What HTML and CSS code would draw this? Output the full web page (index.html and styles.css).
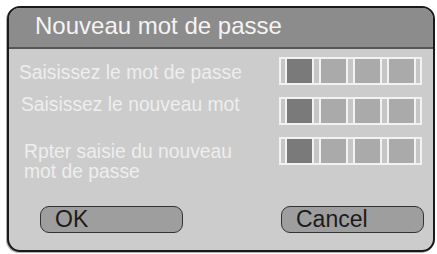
FILE: index.html
```html
<!DOCTYPE html>
<html lang="fr">
<head>
<meta charset="utf-8">
<title>Nouveau mot de passe</title>
<link rel="stylesheet" href="styles.css">
</head>
<body>
<div class="dialog">
  <div class="title">Nouveau mot de passe</div>
  <div class="content">
    <div class="form">
      <div class="row">
        <div class="label label-1">Saisissez le mot de passe</div>
        <div class="pw"><span class="sq sq-on"></span><span class="sq"></span><span class="sq"></span><span class="sq"></span></div>
      </div>
      <div class="row">
        <div class="label label-2">Saisissez le nouveau mot</div>
        <div class="pw"><span class="sq sq-on"></span><span class="sq"></span><span class="sq"></span><span class="sq"></span></div>
      </div>
      <div class="row">
        <div class="label label-3">Rpter saisie du nouveau<br>mot de passe</div>
        <div class="pw"><span class="sq sq-on"></span><span class="sq"></span><span class="sq"></span><span class="sq"></span></div>
      </div>
    </div>
    <div class="buttons">
      <div class="btn">OK</div>
      <div class="btn">Cancel</div>
    </div>
  </div>
</div>
</body>
</html>
```

FILE: styles.css
```css
html, body {
  margin: 0;
  padding: 0;
  background: #ffffff;
}
body {
  font-family: "Liberation Sans", Arial, sans-serif;
  width: 437px;
  height: 254px;
  overflow: hidden;
}
.dialog {
  box-sizing: border-box;
  margin: 6px 0 0 7px;
  width: 428px;
  height: 246px;
  border: 2px solid #1a1a1a;
  border-radius: 13px;
  background: #cccccc;
  overflow: hidden;
  box-shadow: -1px 1px 0 #b0b0b0;
}
.title {
  box-sizing: border-box;
  height: 41px;
  padding: 4px 0 0 26px;
  background: #8c8c8c;
  border-bottom: 2px solid #555555;
  color: #f4f4f4;
  font-size: 24px;
  line-height: 28px;
  white-space: nowrap;
}
.content {
  display: flex;
  flex-direction: column;
}
.form {
  display: flex;
  flex-direction: column;
  gap: 12px;
  padding-top: 8px;
}
.row {
  display: flex;
  height: 28px;
}
.label {
  width: 270px;
  box-sizing: border-box;
  color: #eeeeee;
  font-size: 19.3px;
  line-height: 20px;
  white-space: nowrap;
}
.label-1 { padding: 6px 0 0 10px; }
.label-2 { padding: 0 0 0 12px; margin-top: -2px; }
.label-3 { padding: 5px 0 0 15px; }
.pw {
  box-sizing: border-box;
  display: flex;
  gap: 5px;
  height: 28px;
  padding: 0 4px;
  border: 2px solid #f2f2f2;
  background: #c6c6c6;
}
.sq {
  width: 25px;
  height: 24px;
  border-left: 2px solid #f2f2f2;
  border-right: 2px solid #f2f2f2;
  background: #aaaaaa;
}
.sq-on {
  background: #7a7a7a;
}
.buttons {
  display: flex;
  justify-content: space-between;
  padding: 0 9px 0 31px;
  margin-top: 41px;
}
.btn {
  box-sizing: border-box;
  height: 27px;
  width: 143px;
  padding-left: 14px;
  border: 1px solid #333333;
  border-radius: 9px;
  background: #9e9e9e;
  color: #1c1c1c;
  font-size: 23px;
  line-height: 25px;
}
```
